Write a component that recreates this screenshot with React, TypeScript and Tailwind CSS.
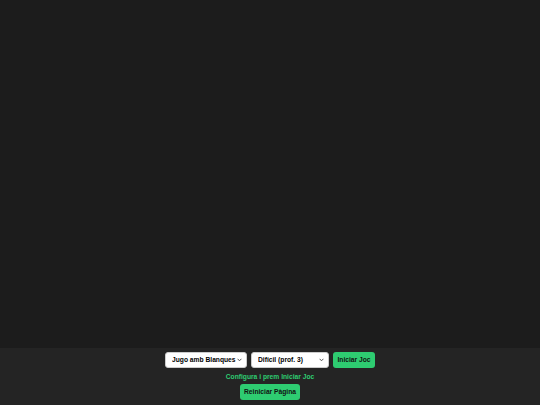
import React from "react";

function Chevron() {
  return (
    <svg className="absolute right-[5px] top-[6px] pointer-events-none" width="5" height="4" viewBox="0 0 5 4">
      <path d="M0.6 0.8 L2.5 2.8 L4.4 0.8" fill="none" stroke="#444" strokeWidth="0.9" />
    </svg>
  );
}

export default function App() {
  return (
    <div className="w-[540px] h-[405px] flex flex-col bg-[#1c1c1c] font-['Liberation_Sans',Arial,sans-serif]">
      <div className="flex-1" />
      <div className="h-[57px] bg-[#242424] flex flex-col items-center pt-[4px]">
        <div className="flex items-center gap-[4px] h-[16px]">
          <div className="relative flex h-[16px]">
            <select className="block appearance-none w-[82px] h-[16px] leading-[14px] py-0 bg-white text-black text-[6.7px] font-bold rounded-[3px] border border-[#ccc] pl-[6px] outline-none" defaultValue="w">
              <option value="w">Jugo amb Blanques</option>
            </select>
            <Chevron />
          </div>
          <div className="relative flex h-[16px]">
            <select className="block appearance-none w-[78px] h-[16px] leading-[14px] py-0 bg-white text-black text-[6.7px] font-bold rounded-[3px] border border-[#ccc] pl-[6px] outline-none" defaultValue="3">
              <option value="3">Difícil (prof. 3)</option>
            </select>
            <Chevron />
          </div>
          <button className="h-[16px] w-[42px] bg-[#2ecc71] text-[#111] text-[6.7px] font-bold rounded-[3px]">Iniciar Joc</button>
        </div>
        <div className="mt-[4px] h-[9px] leading-[9px] text-[6.7px] font-bold text-[#2ecc71]">Configura i prem Iniciar Joc</div>
        <button className="mt-[3px] h-[16px] w-[60px] bg-[#2ecc71] text-[#111] text-[6.7px] font-bold rounded-[3px]">Reiniciar Pàgina</button>
      </div>
    </div>
  );
}
